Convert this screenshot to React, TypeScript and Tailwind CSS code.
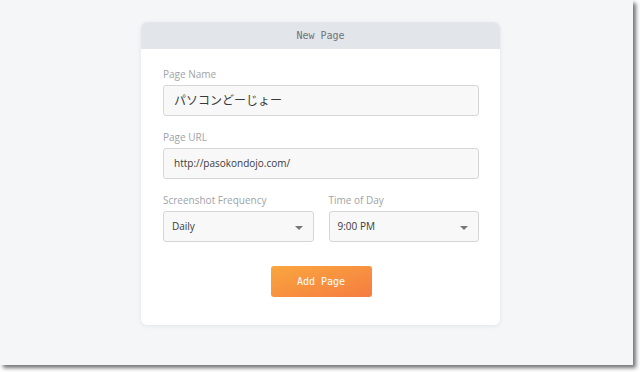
import React from "react";

const sans = "font-['Open_Sans','Noto_Sans_CJK_JP',sans-serif]";
const mono = "font-['DejaVu_Sans_Mono',monospace]";

function Field({ label, value, size = "text-[10px]" }: { label: string; value: string; size?: string }) {
  return (
    <div className="flex flex-col">
      <label className={`${sans} text-[10px] leading-[15px] text-[#9ea3a8] mb-[3px]`}>{label}</label>
      <div className={`${sans} h-[31px] flex items-center px-[10px] bg-[#f8f8f8] border border-[#d6d6d6] rounded-[3px] ${size} text-[#3a3a3a]`}>
        {value}
      </div>
    </div>
  );
}

function SelectField({ label, value }: { label: string; value: string }) {
  return (
    <div className="flex flex-col flex-1">
      <label className={`${sans} text-[10px] leading-[15px] text-[#9ea3a8] mb-[3px]`}>{label}</label>
      <div className={`${sans} h-[31px] flex items-center justify-between pl-[8px] pr-[10px] bg-[#f8f8f8] border border-[#d6d6d6] rounded-[3px] text-[10px] text-[#3a3a3a]`}>
        <span>{value}</span>
        <span className="w-0 h-0 border-l-[4px] border-r-[4px] border-t-[4px] border-l-transparent border-r-transparent border-t-[#777] mt-[2px]" />
      </div>
    </div>
  );
}

export default function App() {
  return (
    <div className="w-[640px] h-[372px] bg-white overflow-hidden">
      <div className="w-[633px] h-[365px] bg-[#f5f6f8] shadow-[3px_3px_4px_rgba(0,0,0,0.55)] pt-[22px] pl-[141px]">
        <div className="w-[359px] bg-white rounded-[6px] shadow-[0_1px_4px_rgba(0,0,0,0.08)] overflow-hidden">
          <div className={`${mono} h-[27px] bg-[#e2e5e9] flex items-center justify-center text-[10px] text-[#6f7479]`}>
            New Page
          </div>
          <div className="pt-[18px] pl-[22px] pr-[21px] pb-[28px] flex flex-col gap-[14px]">
            <Field label="Page Name" value="パソコンどーじょー" size="text-[12px]" />
            <Field label="Page URL" value="http://pasokondojo.com/" />
            <div className="flex gap-[15px]">
              <SelectField label="Screenshot Frequency" value="Daily" />
              <SelectField label="Time of Day" value="9:00 PM" />
            </div>
            <div className="flex justify-center mt-[10px]">
              <button className={`${mono} w-[101px] h-[31px] rounded-[3px] bg-gradient-to-br from-[#f9a63f] to-[#f57c40] text-white text-[10px]`}>
                Add Page
              </button>
            </div>
          </div>
        </div>
      </div>
    </div>
  );
}
